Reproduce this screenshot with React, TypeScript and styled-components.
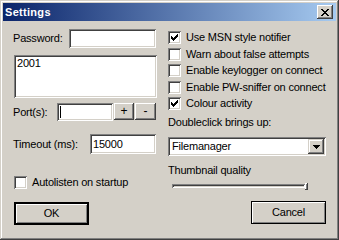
import React from "react";
import styled, { createGlobalStyle, css } from "styled-components";

const Global = createGlobalStyle`
  html, body { margin: 0; padding: 0; background: #d4d0c8; }
  body { font-family: "Liberation Sans", Arial, sans-serif; font-size: 11px; letter-spacing: -0.2px; color: #000; }
  * { box-sizing: border-box; }
`;

const sunken = css`
  background: #fff;
  box-shadow: inset 1px 1px #808080, inset -1px -1px #fff, inset 2px 2px #404040,
    inset -2px -2px #d4d0c8;
`;

const raised = css`
  background: #d4d0c8;
  box-shadow: inset -1px -1px #404040, inset 1px 1px #fff, inset -2px -2px #808080;
`;

const Window = styled.div`
  width: 339px;
  height: 240px;
  background: #d4d0c8;
  padding: 3px;
  display: flex;
  flex-direction: column;
  box-shadow: inset -1px -1px #404040, inset 1px 1px #d4d0c8, inset -2px -2px #808080,
    inset 2px 2px #fff;
`;

const TitleBar = styled.div`
  height: 18px;
  background: linear-gradient(to right, #0a246a, #a6caf0);
  display: flex;
  align-items: center;
  justify-content: space-between;
  padding: 0 3px 0 2px;
`;

const Title = styled.span`
  color: #fff;
  font-weight: bold;
  font-size: 11px;
  letter-spacing: 0.3px;
  line-height: 13px;
`;

const CloseButton = styled.div`
  ${raised};
  width: 16px;
  height: 14px;
  display: flex;
  align-items: center;
  justify-content: center;
`;

const Body = styled.div`
  flex: 1;
  display: flex;
  gap: 11px;
  padding: 8px 10px 0 10px;
`;

const LeftColumn = styled.div`
  width: 144px;
  display: flex;
  flex-direction: column;
`;

const RightColumn = styled.div`
  width: 158px;
  display: flex;
  flex-direction: column;
  padding-top: 2px;
`;

const FieldRow = styled.div<{ $h: number; $mt?: number }>`
  height: ${(p) => p.$h}px;
  margin-top: ${(p) => p.$mt ?? 0}px;
  display: flex;
  align-items: center;
`;

const Label = styled.span<{ $w?: number }>`
  line-height: 13px;
  white-space: nowrap;
  ${(p) => (p.$w ? `width: ${p.$w}px;` : "")}
`;

const Field = styled.div<{ $w: number; $h: number; $ml?: number }>`
  ${sunken};
  width: ${(p) => p.$w}px;
  height: ${(p) => p.$h}px;
  margin-left: ${(p) => p.$ml ?? 0}px;
  padding: 0 3px;
  display: flex;
  align-items: center;
  line-height: 13px;
`;

const Caret = styled.span`
  width: 1px;
  height: 12px;
  background: #000;
`;

const ListBox = styled.div`
  ${sunken};
  margin: 7px 0 0 1px;
  width: 143px;
  height: 43px;
  padding: 2px 3px;
  line-height: 13px;
`;

const SmallButton = styled.div<{ $w: number }>`
  ${raised};
  width: ${(p) => p.$w}px;
  height: 17px;
  margin-left: 1px;
  align-self: flex-start;
  display: flex;
  align-items: center;
  justify-content: center;
  font-size: 12px;
  line-height: 13px;
`;

const CheckRow = styled.div<{ $mt?: number; $ml?: number }>`
  display: flex;
  align-items: center;
  height: 13px;
  margin-top: ${(p) => p.$mt ?? 0}px;
  margin-left: ${(p) => p.$ml ?? 0}px;
`;

const CheckBox = styled.div`
  ${sunken};
  width: 13px;
  height: 13px;
  flex: none;
  margin-right: 5px;
`;

const CheckList = styled.div`
  display: flex;
  flex-direction: column;
  gap: 3.5px;
`;

const Combo = styled.div`
  ${sunken};
  margin-top: 8px;
  height: 19px;
  display: flex;
  align-items: center;
  padding: 2px;
`;

const ComboText = styled.span`
  flex: 1;
  padding-left: 2px;
  line-height: 13px;
`;

const ComboButton = styled.div`
  ${raised};
  box-shadow: inset -1px -1px #404040, inset 1px 1px #d4d0c8, inset -2px -2px #808080,
    inset 2px 2px #fff;
  width: 16px;
  height: 15px;
  display: flex;
  align-items: center;
  justify-content: center;
`;

const Slider = styled.div`
  margin: 6px 0 0 4px;
  width: 136px;
  height: 8px;
  display: flex;
  align-items: flex-start;
`;

const Track = styled.div`
  flex: 1;
  height: 4px;
  margin-top: 1px;
  box-shadow: inset 1px 1px #808080, inset -1px -1px #fff, inset 2px 2px #404040,
    inset -2px -2px #d4d0c8;
  background: #d4d0c8;
`;

const Thumb = styled.div`
  width: 3px;
  height: 7px;
  border-right: 1px solid #404040;
  border-bottom: 1px solid #404040;
  box-shadow: inset 1px 1px #fff, inset -1px -1px #808080;
  background: #d4d0c8;
`;

const DialogButton = styled.div<{ $default?: boolean; $mt: number }>`
  width: 75px;
  height: 23px;
  margin-top: ${(p) => p.$mt}px;
  display: flex;
  align-items: center;
  justify-content: center;
  line-height: 13px;
  background: #d4d0c8;
  border: ${(p) => (p.$default ? 2 : 1)}px solid #000;
  box-shadow: inset 1px 1px #fff, inset -1px -1px #808080;
`;

const OkButton = styled(DialogButton)`
  margin-left: 1px;
`;

const CancelButton = styled(DialogButton)`
  align-self: flex-end;
`;

const SectionLabel = styled.div<{ $mt: number }>`
  margin-top: ${(p) => p.$mt}px;
  line-height: 13px;
  white-space: nowrap;
`;

const Check = () => (
  <svg width="13" height="13" viewBox="0 0 13 13" shapeRendering="crispEdges">
    <rect x="9" y="3" width="1" height="1" />
    <rect x="8" y="4" width="2" height="1" />
    <rect x="3" y="5" width="1" height="1" />
    <rect x="7" y="5" width="3" height="1" />
    <rect x="3" y="6" width="2" height="1" />
    <rect x="6" y="6" width="3" height="1" />
    <rect x="3" y="7" width="5" height="1" />
    <rect x="4" y="8" width="3" height="1" />
    <rect x="5" y="9" width="1" height="1" />
  </svg>
);

const CloseGlyph = () => (
  <svg width="8" height="7" viewBox="0 0 8 7" shapeRendering="crispEdges">
    <rect x="0" y="0" width="2" height="1" />
    <rect x="6" y="0" width="2" height="1" />
    <rect x="1" y="1" width="2" height="1" />
    <rect x="5" y="1" width="2" height="1" />
    <rect x="2" y="2" width="4" height="1" />
    <rect x="3" y="3" width="2" height="1" />
    <rect x="2" y="4" width="4" height="1" />
    <rect x="1" y="5" width="2" height="1" />
    <rect x="5" y="5" width="2" height="1" />
    <rect x="0" y="6" width="2" height="1" />
    <rect x="6" y="6" width="2" height="1" />
  </svg>
);

const DownArrow = () => (
  <svg width="7" height="4" viewBox="0 0 7 4" shapeRendering="crispEdges">
    <rect x="0" y="0" width="7" height="1" />
    <rect x="1" y="1" width="5" height="1" />
    <rect x="2" y="2" width="3" height="1" />
    <rect x="3" y="3" width="1" height="1" />
  </svg>
);

const options = [
  { label: "Use MSN style notifier", checked: true },
  { label: "Warn about false attempts", checked: false },
  { label: "Enable keylogger on connect", checked: false },
  { label: "Enable PW-sniffer on connect", checked: false },
  { label: "Colour activity", checked: true },
];

export default function App() {
  return (
    <>
      <Global />
      <Window>
        <TitleBar>
          <Title>Settings</Title>
          <CloseButton>
            <CloseGlyph />
          </CloseButton>
        </TitleBar>
        <Body>
          <LeftColumn>
            <FieldRow $h={19}>
              <Label $w={56}>Password:</Label>
              <Field $w={87} $h={19} />
            </FieldRow>
            <ListBox>2001</ListBox>
            <FieldRow $h={18} $mt={5}>
              <Label $w={44}>Port(s):</Label>
              <Field $w={56} $h={18}>
                <Caret />
              </Field>
              <SmallButton $w={20}>+</SmallButton>
              <SmallButton $w={21}>-</SmallButton>
            </FieldRow>
            <FieldRow $h={20} $mt={13}>
              <Label $w={77}>Timeout (ms):</Label>
              <Field $w={66} $h={20}>15000</Field>
            </FieldRow>
            <CheckRow $mt={22} $ml={1}>
              <CheckBox />
              <Label>Autolisten on startup</Label>
            </CheckRow>
            <OkButton $default $mt={13}>OK</OkButton>
          </LeftColumn>
          <RightColumn>
            <CheckList>
              {options.map((o) => (
                <CheckRow key={o.label}>
                  <CheckBox>{o.checked && <Check />}</CheckBox>
                  <Label>{o.label}</Label>
                </CheckRow>
              ))}
            </CheckList>
            <SectionLabel $mt={6}>Doubleclick brings up:</SectionLabel>
            <Combo>
              <ComboText>Filemanager</ComboText>
              <ComboButton>
                <DownArrow />
              </ComboButton>
            </Combo>
            <SectionLabel $mt={8}>Thumbnail quality</SectionLabel>
            <Slider>
              <Track />
              <Thumb />
            </Slider>
            <CancelButton $mt={10}>Cancel</CancelButton>
          </RightColumn>
        </Body>
      </Window>
    </>
  );
}
